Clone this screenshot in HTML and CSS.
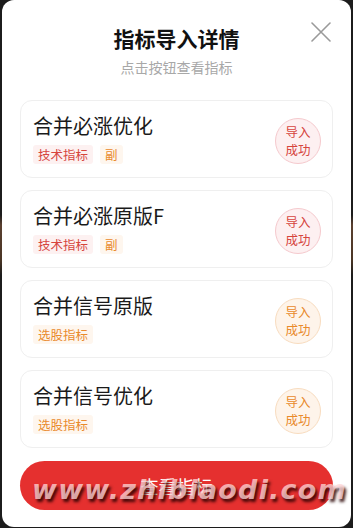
FILE: index.html
```html
<!DOCTYPE html>
<html lang="zh">
<head>
<meta charset="utf-8">
<title>指标导入详情</title>
<link rel="stylesheet" href="styles.css">
</head>
<body>
<div class="modal">
  <button class="close" aria-label="关闭">
    <svg width="20" height="20" viewBox="0 0 20 20"><path d="M1 1 L19 19 M19 1 L1 19" stroke="#9a9a9a" stroke-width="1.6" fill="none" stroke-linecap="round"/></svg>
  </button>
  <div class="header">
    <div class="title">指标导入详情</div>
    <div class="subtitle">点击按钮查看指标</div>
  </div>
  <div class="list">
    <div class="card">
      <div class="info">
        <div class="name">合并必涨优化</div>
        <div class="tags"><span class="tag red">技术指标</span><span class="tag orange">副</span></div>
      </div>
      <div class="badge red"><span>导入</span><span>成功</span></div>
    </div>
    <div class="card">
      <div class="info">
        <div class="name">合并必涨原版F</div>
        <div class="tags"><span class="tag red">技术指标</span><span class="tag orange">副</span></div>
      </div>
      <div class="badge red"><span>导入</span><span>成功</span></div>
    </div>
    <div class="card">
      <div class="info">
        <div class="name">合并信号原版</div>
        <div class="tags"><span class="tag orange">选股指标</span></div>
      </div>
      <div class="badge orange"><span>导入</span><span>成功</span></div>
    </div>
    <div class="card">
      <div class="info">
        <div class="name">合并信号优化</div>
        <div class="tags"><span class="tag orange">选股指标</span></div>
      </div>
      <div class="badge orange"><span>导入</span><span>成功</span></div>
    </div>
  </div>
  <div class="footer">
    <button class="view">查看指标</button>
    <div class="watermark">www.zhibiaodi.com</div>
  </div>
</div>
</body>
</html>
```
FILE: styles.css
```css
* { box-sizing: border-box; }
html, body { margin: 0; padding: 0; }
body {
  width: 353px;
  height: 528px;
  overflow: hidden;
  background: linear-gradient(to bottom, #1c1c1c 0, #1c1c1c 215px, #5a4030 225px, #4a3525 260px, #1c1c1c 275px, #1c1c1c 100%);
  font-family: "Noto Sans CJK SC", "Noto Sans", sans-serif;
}
.modal {
  position: relative;
  margin: 0 2px;
  height: 527px;
  background: #fff;
  border-radius: 12px;
  padding: 0 18px;
}
.close {
  position: absolute;
  top: 22px;
  right: 20px;
  width: 20px;
  height: 20px;
  padding: 0;
  border: 0;
  background: none;
  display: flex;
}
.header {
  padding-top: 23px;
  text-align: center;
}
.title {
  font-size: 21px;
  line-height: 30px;
  font-weight: 600;
  color: #111;
}
.subtitle {
  margin-top: 4px;
  font-size: 14px;
  line-height: 20px;
  color: #a8a8a8;
}
.list {
  margin-top: 23px;
  display: flex;
  flex-direction: column;
  gap: 12px;
}
.card {
  height: 78px;
  border: 1px solid #efefef;
  border-radius: 12px;
  padding: 11px 11px 0 12px;
  display: flex;
  justify-content: space-between;
  align-items: flex-start;
}
.name {
  font-size: 20px;
  line-height: 28px;
  color: #1a1a1a;
}
.tags {
  margin-top: 5px;
  display: flex;
  gap: 7px;
}
.tag {
  height: 19px;
  line-height: 19px;
  padding: 0 5px;
  font-size: 12.5px;
  border-radius: 3px;
}
.tag.red { color: #d6453e; background: #fdf1f1; }
.tag.orange { color: #e98a2c; background: #fef6ee; }
.badge {
  margin-top: 6px;
  width: 46px;
  height: 46px;
  border-radius: 50%;
  display: flex;
  flex-direction: column;
  align-items: center;
  justify-content: center;
  font-size: 12.5px;
  line-height: 18px;
}
.badge.red { color: #d6453e; background: #fdf0f1; border: 1px solid #f5c9cd; }
.badge.orange { color: #e98a2c; background: #fef4ea; border: 1px solid #f8dcbf; }
.footer {
  position: relative;
  margin-top: 13px;
}
.view {
  display: block;
  width: 100%;
  height: 49px;
  border: 0;
  border-radius: 25px;
  background: #e5302f;
  color: #fff;
  font-family: "Noto Sans CJK SC", sans-serif;
  font-size: 18px;
}
.watermark {
  position: absolute;
  left: 12px;
  top: 14px;
  font-family: "DejaVu Sans", sans-serif;
  font-weight: bold;
  font-style: italic;
  font-size: 27px;
  letter-spacing: 1.2px;
  line-height: 30px;
  color: rgba(255, 215, 215, 0.75);
  text-shadow: 2px 3px 3px rgba(40, 0, 0, 0.85);
  white-space: nowrap;
  pointer-events: none;
}
```
